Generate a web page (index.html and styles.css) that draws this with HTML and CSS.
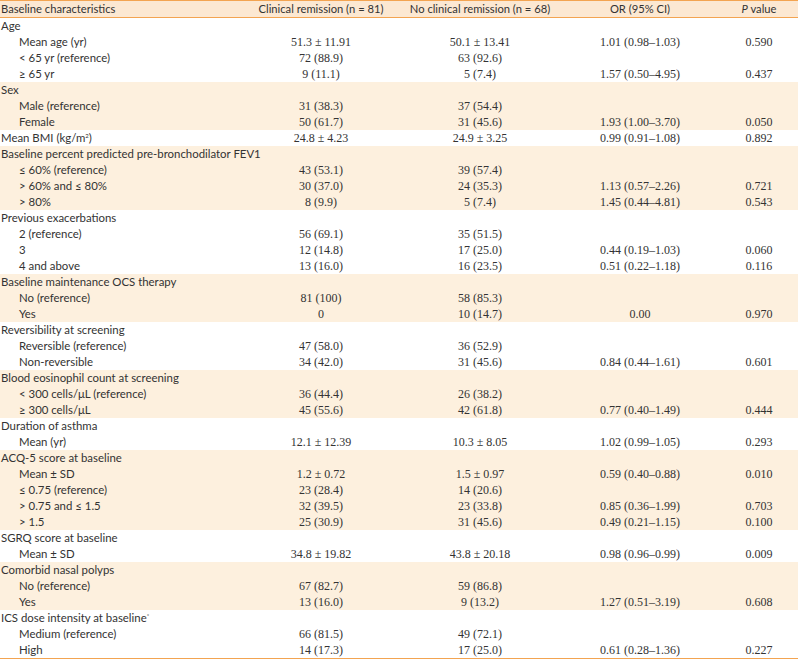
FILE: index.html
```html
<!DOCTYPE html>
<html>
<head>
<meta charset="utf-8">
<link rel="stylesheet" href="styles.css">
</head>
<body>
<table class="tbl">
<colgroup><col class="c-label"><col class="c-a"><col class="c-b"><col class="c-or"><col class="c-p"></colgroup>
<thead>
<tr><th class="lbl">Baseline characteristics</th><th>Clinical remission (n = 81)</th><th>No clinical remission (n = 68)</th><th>OR (95% CI)</th><th><i>P</i> value</th></tr>
</thead>
<tbody>
<tr><td class="grp">Age</td><td></td><td></td><td></td><td></td></tr>
<tr><td class="sub">Mean age (yr)</td><td>51.3 ± 11.91</td><td>50.1 ± 13.41</td><td>1.01 (0.98–1.03)</td><td>0.590</td></tr>
<tr><td class="sub">&lt; 65 yr (reference)</td><td>72 (88.9)</td><td>63 (92.6)</td><td></td><td></td></tr>
<tr><td class="sub">≥ 65 yr</td><td>9 (11.1)</td><td>5 (7.4)</td><td>1.57 (0.50–4.95)</td><td>0.437</td></tr>
</tbody>
<tbody class="alt">
<tr><td class="grp">Sex</td><td></td><td></td><td></td><td></td></tr>
<tr><td class="sub">Male (reference)</td><td>31 (38.3)</td><td>37 (54.4)</td><td></td><td></td></tr>
<tr><td class="sub">Female</td><td>50 (61.7)</td><td>31 (45.6)</td><td>1.93 (1.00–3.70)</td><td>0.050</td></tr>
</tbody>
<tbody>
<tr><td class="grp">Mean BMI (kg/m<sup>2</sup>)</td><td>24.8 ± 4.23</td><td>24.9 ± 3.25</td><td>0.99 (0.91–1.08)</td><td>0.892</td></tr>
</tbody>
<tbody class="alt">
<tr><td class="grp">Baseline percent predicted pre-bronchodilator FEV1</td><td></td><td></td><td></td><td></td></tr>
<tr><td class="sub">≤ 60% (reference)</td><td>43 (53.1)</td><td>39 (57.4)</td><td></td><td></td></tr>
<tr><td class="sub">&gt; 60% and ≤ 80%</td><td>30 (37.0)</td><td>24 (35.3)</td><td>1.13 (0.57–2.26)</td><td>0.721</td></tr>
<tr><td class="sub">&gt; 80%</td><td>8 (9.9)</td><td>5 (7.4)</td><td>1.45 (0.44–4.81)</td><td>0.543</td></tr>
</tbody>
<tbody>
<tr><td class="grp">Previous exacerbations</td><td></td><td></td><td></td><td></td></tr>
<tr><td class="sub">2 (reference)</td><td>56 (69.1)</td><td>35 (51.5)</td><td></td><td></td></tr>
<tr><td class="sub">3</td><td>12 (14.8)</td><td>17 (25.0)</td><td>0.44 (0.19–1.03)</td><td>0.060</td></tr>
<tr><td class="sub">4 and above</td><td>13 (16.0)</td><td>16 (23.5)</td><td>0.51 (0.22–1.18)</td><td>0.116</td></tr>
</tbody>
<tbody class="alt">
<tr><td class="grp">Baseline maintenance OCS therapy</td><td></td><td></td><td></td><td></td></tr>
<tr><td class="sub">No (reference)</td><td>81 (100)</td><td>58 (85.3)</td><td></td><td></td></tr>
<tr><td class="sub">Yes</td><td>0</td><td>10 (14.7)</td><td>0.00</td><td>0.970</td></tr>
</tbody>
<tbody>
<tr><td class="grp">Reversibility at screening</td><td></td><td></td><td></td><td></td></tr>
<tr><td class="sub">Reversible (reference)</td><td>47 (58.0)</td><td>36 (52.9)</td><td></td><td></td></tr>
<tr><td class="sub">Non-reversible</td><td>34 (42.0)</td><td>31 (45.6)</td><td>0.84 (0.44–1.61)</td><td>0.601</td></tr>
</tbody>
<tbody class="alt">
<tr><td class="grp">Blood eosinophil count at screening</td><td></td><td></td><td></td><td></td></tr>
<tr><td class="sub">&lt; 300 cells/μL (reference)</td><td>36 (44.4)</td><td>26 (38.2)</td><td></td><td></td></tr>
<tr><td class="sub">≥ 300 cells/μL</td><td>45 (55.6)</td><td>42 (61.8)</td><td>0.77 (0.40–1.49)</td><td>0.444</td></tr>
</tbody>
<tbody>
<tr><td class="grp">Duration of asthma</td><td></td><td></td><td></td><td></td></tr>
<tr><td class="sub">Mean (yr)</td><td>12.1 ± 12.39</td><td>10.3 ± 8.05</td><td>1.02 (0.99–1.05)</td><td>0.293</td></tr>
</tbody>
<tbody class="alt">
<tr><td class="grp">ACQ-5 score at baseline</td><td></td><td></td><td></td><td></td></tr>
<tr><td class="sub">Mean ± SD</td><td>1.2 ± 0.72</td><td>1.5 ± 0.97</td><td>0.59 (0.40–0.88)</td><td>0.010</td></tr>
<tr><td class="sub">≤ 0.75 (reference)</td><td>23 (28.4)</td><td>14 (20.6)</td><td></td><td></td></tr>
<tr><td class="sub">&gt; 0.75 and ≤ 1.5</td><td>32 (39.5)</td><td>23 (33.8)</td><td>0.85 (0.36–1.99)</td><td>0.703</td></tr>
<tr><td class="sub">&gt; 1.5</td><td>25 (30.9)</td><td>31 (45.6)</td><td>0.49 (0.21–1.15)</td><td>0.100</td></tr>
</tbody>
<tbody>
<tr><td class="grp">SGRQ score at baseline</td><td></td><td></td><td></td><td></td></tr>
<tr><td class="sub">Mean ± SD</td><td>34.8 ± 19.82</td><td>43.8 ± 20.18</td><td>0.98 (0.96–0.99)</td><td>0.009</td></tr>
</tbody>
<tbody class="alt">
<tr><td class="grp">Comorbid nasal polyps</td><td></td><td></td><td></td><td></td></tr>
<tr><td class="sub">No (reference)</td><td>67 (82.7)</td><td>59 (86.8)</td><td></td><td></td></tr>
<tr><td class="sub">Yes</td><td>13 (16.0)</td><td>9 (13.2)</td><td>1.27 (0.51–3.19)</td><td>0.608</td></tr>
</tbody>
<tbody class="last">
<tr><td class="grp">ICS dose intensity at baseline<sup>*</sup></td><td></td><td></td><td></td><td></td></tr>
<tr><td class="sub">Medium (reference)</td><td>66 (81.5)</td><td>49 (72.1)</td><td></td><td></td></tr>
<tr><td class="sub">High</td><td>14 (17.3)</td><td>17 (25.0)</td><td>0.61 (0.28–1.36)</td><td>0.227</td></tr>
</tbody>
</table>
</body>
</html>
```
FILE: styles.css
```css
html, body {
  margin: 0;
  padding: 0;
  background: #ffffff;
}
.tbl {
  width: 798px;
  border-collapse: collapse;
  table-layout: fixed;
  color: #333333;
  font-family: "Liberation Serif", serif;
  font-size: 12px;
}
.c-label { width: 242px; }
.c-a { width: 158px; }
.c-b { width: 160px; }
.c-or { width: 160px; }
.c-p { width: 78px; }
.tbl th {
  font-family: Lato, "Liberation Sans", sans-serif;
  font-weight: normal;
  font-size: 11.2px;
  height: 16px;
  line-height: 16px;
  padding: 0;
  text-align: center;
  background: #fce8d2;
  border-top: 1px solid #f3a451;
  border-bottom: 1px solid #f3a451;
  white-space: nowrap;
}
.tbl th.lbl {
  text-align: left;
  padding-left: 1px;
}
.tbl td {
  height: 16px;
  line-height: 16px;
  padding: 0;
  text-align: center;
  white-space: nowrap;
}
.tbl td.grp,
.tbl td.sub {
  font-family: Lato, "Liberation Sans", sans-serif;
  font-size: 11.4px;
  text-align: left;
}
.tbl td.grp { padding-left: 1px; }
.tbl td.sub { padding-left: 19px; }
.tbl sup {
  font-size: 6px;
  line-height: 0;
  vertical-align: 4px;
}
.alt td { background: #fdf0de; }
.last tr:last-child td { border-bottom: 1px solid #f3a451; }
```
